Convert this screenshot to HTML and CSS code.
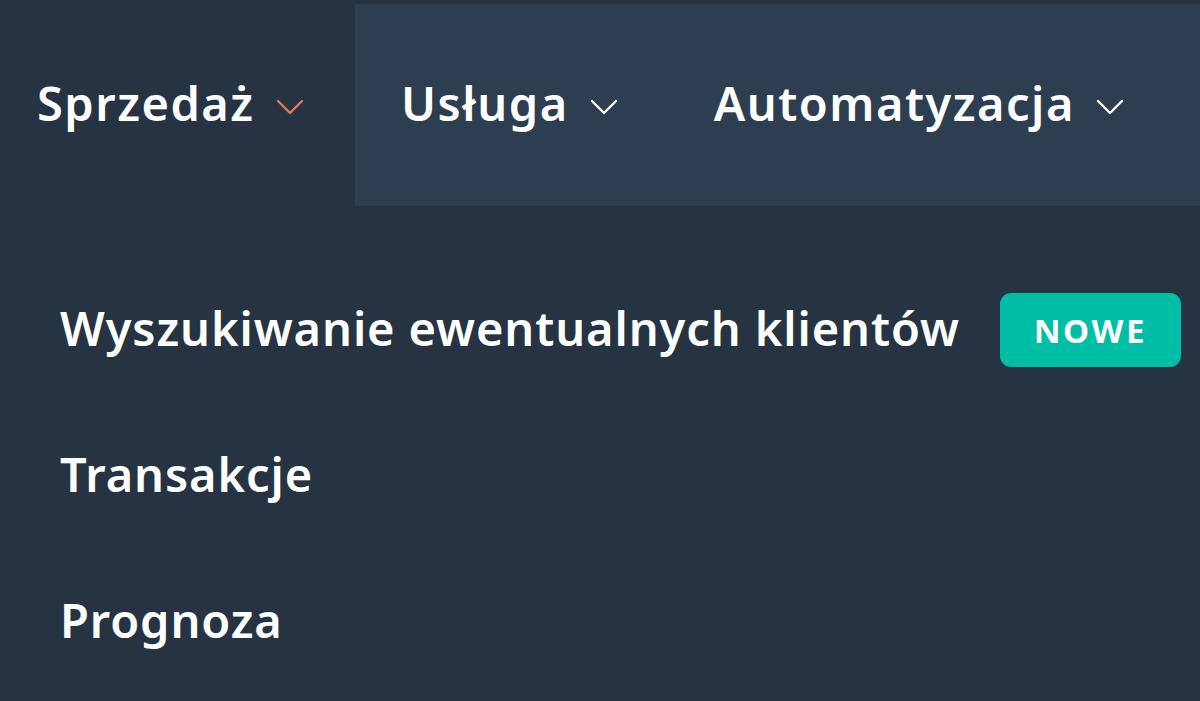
FILE: index.html
```html
<!DOCTYPE html>
<html lang="pl">
<head>
<meta charset="utf-8">
<title>Menu</title>
<link rel="stylesheet" href="styles.css">
</head>
<body>
<nav class="nav">
  <div class="nav-item active">
    <span class="nav-label">Sprzedaż</span>
    <svg class="chev" viewBox="0 0 28 16" width="28" height="16"><path d="M2 2 L14 14 L26 2" fill="none" stroke="currentColor" stroke-width="2.4" stroke-linecap="round" stroke-linejoin="round"/></svg>
  </div>
  <div class="nav-rest">
    <div class="nav-item">
      <span class="nav-label">Usługa</span>
      <svg class="chev" viewBox="0 0 28 16" width="28" height="16"><path d="M2 2 L14 14 L26 2" fill="none" stroke="currentColor" stroke-width="2.4" stroke-linecap="round" stroke-linejoin="round"/></svg>
    </div>
    <div class="nav-item">
      <span class="nav-label">Automatyzacja</span>
      <svg class="chev" viewBox="0 0 28 16" width="28" height="16"><path d="M2 2 L14 14 L26 2" fill="none" stroke="currentColor" stroke-width="2.4" stroke-linecap="round" stroke-linejoin="round"/></svg>
    </div>
  </div>
</nav>
<ul class="menu">
  <li class="menu-item"><span class="menu-label">Wyszukiwanie ewentualnych klientów</span><span class="badge">NOWE</span></li>
  <li class="menu-item"><span class="menu-label">Transakcje</span></li>
  <li class="menu-item"><span class="menu-label">Prognoza</span></li>
</ul>
</body>
</html>
```
FILE: styles.css
```css
html, body {
  margin: 0;
  padding: 0;
  background: #253342;
  width: 1200px;
  height: 701px;
  overflow: hidden;
  font-family: "Noto Sans", "Liberation Sans", sans-serif;
  color: #ffffff;
}
.nav {
  display: flex;
  padding-top: 4px;
  height: 202px;
}
.nav-rest {
  flex: 1;
  display: flex;
  background: #2d3e50;
  padding-left: 46px;
  gap: 96px;
}
.nav-item {
  display: flex;
  align-items: center;
  gap: 21px;
  font-size: 47px;
  font-weight: 600;
  letter-spacing: 1.5px;
}
.nav-item.active {
  width: 355px;
  box-sizing: border-box;
  padding-left: 37px;
}
.nav-label {
  line-height: 1;
  padding-bottom: 4px;
}
.chev {
  color: #ffffff;
  margin-top: 4px;
}
.active .chev {
  color: #e8765b;
}
.menu {
  list-style: none;
  margin: 0;
  padding: 51px 0 0 60px;
}
.menu-item {
  display: flex;
  align-items: center;
  gap: 40px;
  height: 146px;
  font-size: 47px;
  font-weight: 600;
  letter-spacing: 0.9px;
  line-height: 1;
}
.menu-label {
  padding-bottom: 4px;
}
.badge {
  background: #00bda5;
  border-radius: 11px;
  font-size: 33px;
  font-weight: 700;
  letter-spacing: 2.6px;
  height: 74px;
  width: 181px;
  display: flex;
  align-items: center;
  justify-content: center;
}
```
